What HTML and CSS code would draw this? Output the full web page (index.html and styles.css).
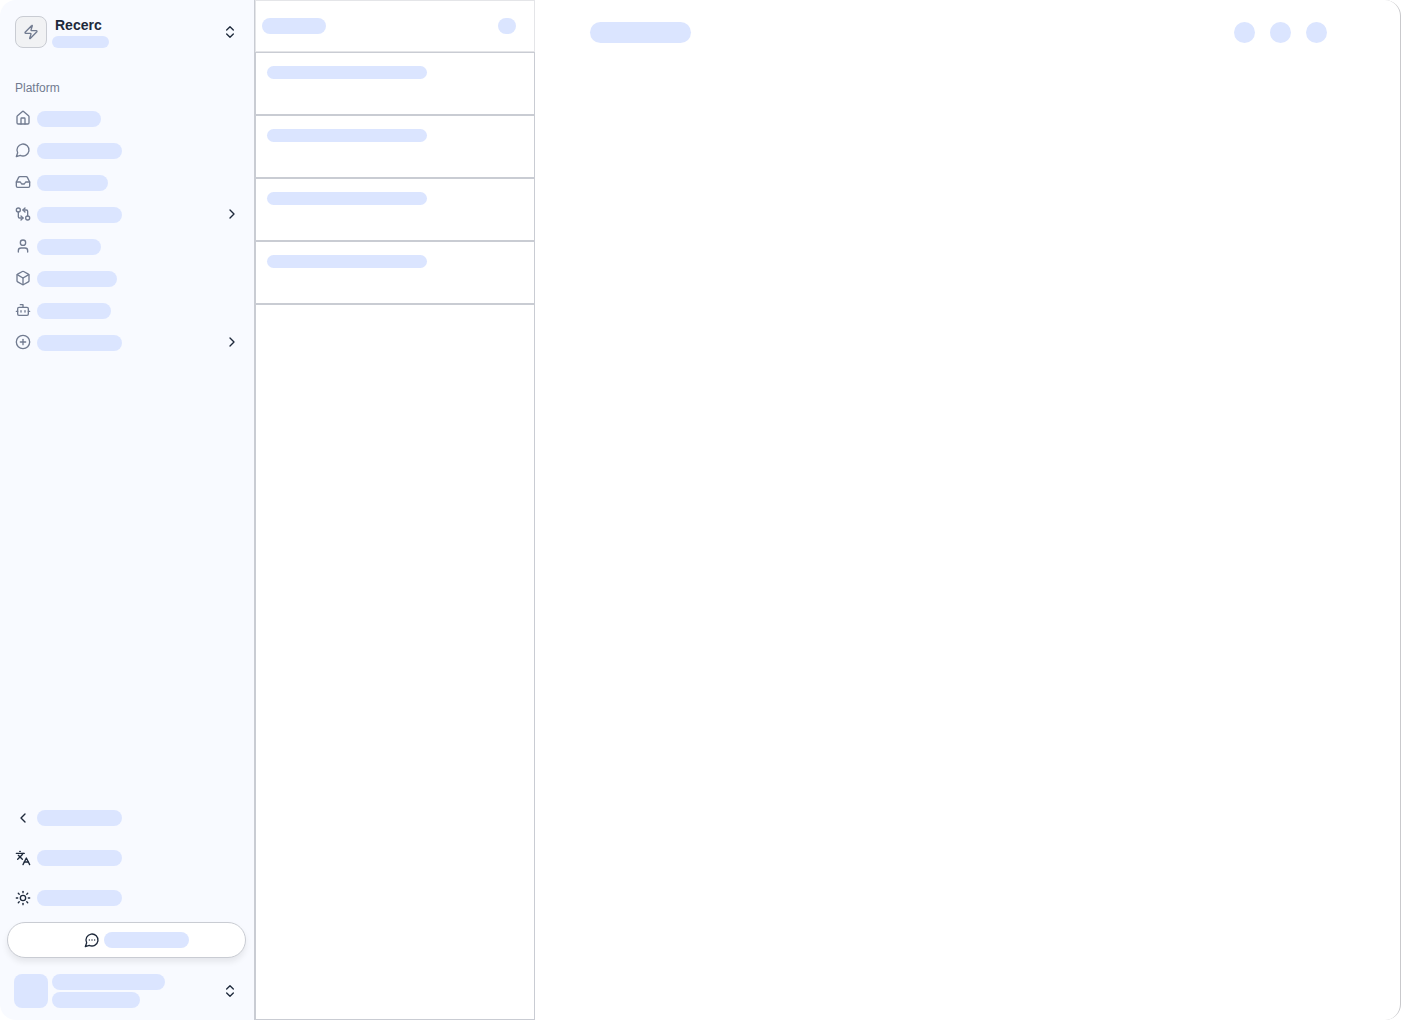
FILE: index.html
```html
<!DOCTYPE html>
<html lang="en">
<head>
    <meta charset="UTF-8">
    <meta name="viewport" content="width=device-width, initial-scale=1.0">
    <title>Recerc</title>

    <link rel="stylesheet" href="styles.css">
</head>
<body>
    <div class="app">
        <aside class="sidebar">
            <button class="team" type="button">
                <span class="team-logo">
                    <svg class="icon" viewBox="0 0 24 24"><path d="M4 14a1 1 0 0 1-.78-1.63l9.9-10.2a.5.5 0 0 1 .86.46l-1.92 6.02A1 1 0 0 0 13 10h7a1 1 0 0 1 .78 1.63l-9.9 10.2a.5.5 0 0 1-.86-.46l1.92-6.02A1 1 0 0 0 11 14z"/></svg>
                </span>
                <span class="team-text">
                    <span class="team-name">Recerc</span>
                    <span class="bar small w-57"></span>
                </span>
                <svg class="icon dark end" viewBox="0 0 24 24"><path d="m7 15 5 5 5-5"/><path d="m7 9 5-5 5 5"/></svg>
            </button>

            <h2 class="group-label">Platform</h2>
            <nav class="nav">
                <a href="#" class="nav-item" aria-label="Home">
                    <svg class="icon" viewBox="0 0 24 24"><path d="M15 21v-8a1 1 0 0 0-1-1h-4a1 1 0 0 0-1 1v8"/><path d="M3 10a2 2 0 0 1 .709-1.528l7-6a2 2 0 0 1 2.582 0l7 6A2 2 0 0 1 21 10v9a2 2 0 0 1-2 2H5a2 2 0 0 1-2-2z"/></svg>
                    <span class="bar w-64"></span>
                </a>
                <a href="#" class="nav-item" aria-label="Chat">
                    <svg class="icon" viewBox="0 0 24 24"><path d="M7.9 20A9 9 0 1 0 4 16.1L2 22Z"/></svg>
                    <span class="bar w-85"></span>
                </a>
                <a href="#" class="nav-item" aria-label="Inbox">
                    <svg class="icon" viewBox="0 0 24 24"><path d="M22 12h-6l-2 3h-4l-2-3H2"/><path d="M5.45 5.11 2 12v6a2 2 0 0 0 2 2h16a2 2 0 0 0 2-2v-6l-3.45-6.89A2 2 0 0 0 16.76 4H7.24a2 2 0 0 0-1.79 1.11z"/></svg>
                    <span class="bar w-71"></span>
                </a>
                <a href="#" class="nav-item" aria-label="Workflows">
                    <svg class="icon" viewBox="0 0 24 24"><circle cx="5" cy="6" r="3"/><path d="M12 6h5a2 2 0 0 1 2 2v7"/><path d="m15 9-3-3 3-3"/><circle cx="19" cy="18" r="3"/><path d="M12 18H7a2 2 0 0 1-2-2V9"/><path d="m9 15 3 3-3 3"/></svg>
                    <span class="bar w-85"></span>
                    <svg class="icon dark end" viewBox="0 0 24 24"><path d="m9 18 6-6-6-6"/></svg>
                </a>
                <a href="#" class="nav-item" aria-label="Contacts">
                    <svg class="icon" viewBox="0 0 24 24"><path d="M19 21v-2a4 4 0 0 0-4-4H9a4 4 0 0 0-4 4v2"/><circle cx="12" cy="7" r="4"/></svg>
                    <span class="bar w-64"></span>
                </a>
                <a href="#" class="nav-item" aria-label="Products">
                    <svg class="icon" viewBox="0 0 24 24"><path d="M21 8a2 2 0 0 0-1-1.73l-7-4a2 2 0 0 0-2 0l-7 4A2 2 0 0 0 3 8v8a2 2 0 0 0 1 1.73l7 4a2 2 0 0 0 2 0l7-4A2 2 0 0 0 21 16Z"/><path d="m3.3 7 8.7 5 8.7-5"/><path d="M12 22V12"/></svg>
                    <span class="bar w-80"></span>
                </a>
                <a href="#" class="nav-item" aria-label="Agents">
                    <svg class="icon" viewBox="0 0 24 24"><path d="M12 8V4H8"/><rect width="16" height="12" x="4" y="8" rx="2"/><path d="M2 14h2"/><path d="M20 14h2"/><path d="M15 13v2"/><path d="M9 13v2"/></svg>
                    <span class="bar w-74"></span>
                </a>
                <a href="#" class="nav-item" aria-label="More">
                    <svg class="icon" viewBox="0 0 24 24"><circle cx="12" cy="12" r="10"/><path d="M8 12h8"/><path d="M12 8v8"/></svg>
                    <span class="bar w-85"></span>
                    <svg class="icon dark end" viewBox="0 0 24 24"><path d="m9 18 6-6-6-6"/></svg>
                </a>
            </nav>

            <div class="tools">
                <button class="tool" type="button" aria-label="Collapse">
                    <svg class="icon dark" viewBox="0 0 24 24"><path d="m15 18-6-6 6-6"/></svg>
                    <span class="bar w-85"></span>
                </button>
                <button class="tool" type="button" aria-label="Language">
                    <svg class="icon dark" viewBox="0 0 24 24"><path d="m5 8 6 6"/><path d="m4 14 6-6 2-3"/><path d="M2 5h12"/><path d="M7 2h1"/><path d="m22 22-5-10-5 10"/><path d="M14 18h6"/></svg>
                    <span class="bar w-85"></span>
                </button>
                <button class="tool" type="button" aria-label="Theme">
                    <svg class="icon dark" viewBox="0 0 24 24"><circle cx="12" cy="12" r="4"/><path d="M12 2v2"/><path d="M12 20v2"/><path d="m4.93 4.93 1.41 1.41"/><path d="m17.66 17.66 1.41 1.41"/><path d="M2 12h2"/><path d="M20 12h2"/><path d="m6.34 17.66-1.41 1.41"/><path d="m19.07 4.93-1.41 1.41"/></svg>
                    <span class="bar w-85"></span>
                </button>
            </div>

            <button class="support" type="button" aria-label="Support">
                <svg class="icon dark" viewBox="0 0 24 24"><path d="M7.9 20A9 9 0 1 0 4 16.1L2 22Z"/><path d="M8 12h.01"/><path d="M12 12h.01"/><path d="M16 12h.01"/></svg>
                <span class="bar w-85"></span>
            </button>

            <button class="user" type="button" aria-label="Account">
                <span class="avatar"></span>
                <span class="user-text">
                    <span class="bar w-113"></span>
                    <span class="bar w-88"></span>
                </span>
                <svg class="icon dark end" viewBox="0 0 24 24"><path d="m7 15 5 5 5-5"/><path d="m7 9 5-5 5 5"/></svg>
            </button>
        </aside>

        <section class="list">
            <header class="list-header">
                <span class="bar w-64"></span>
                <span class="bar w-18"></span>
            </header>
            <ul class="threads">
                <li class="thread"><span class="bar line w-160"></span></li>
                <li class="thread"><span class="bar line w-160"></span></li>
                <li class="thread"><span class="bar line w-160"></span></li>
                <li class="thread"><span class="bar line w-160"></span></li>
            </ul>
        </section>

        <main class="content">
            <header class="content-header">
                <span class="bar large w-101"></span>
                <div class="actions">
                    <span class="dot"></span>
                    <span class="dot"></span>
                    <span class="dot"></span>
                </div>
            </header>
        </main>
    </div>
</body>
</html>
```

FILE: styles.css
```css
*, *:before, *:after{
    margin: 0;
    padding: 0;
    box-sizing: border-box;
}
body{
    background: #fff;
    color: #1e293b;
    font-family: "Liberation Sans", Arial, sans-serif;
}
button{
    border: none;
    background: none;
    font: inherit;
    color: inherit;
    text-align: left;
    cursor: pointer;
}
a{
    color: inherit;
    text-decoration: none;
}
.app{
    min-height: 100vh;
    display: flex;
}

/* placeholder bars */
.bar{
    display: block;
    flex: none;
    height: 16px;
    border-radius: 8px;
    background: #dbe5ff;
}
.small{ height: 12px; }
.line{ height: 13px; }
.large{
    height: 21px;
    border-radius: 11px;
}
.w-18{ width: 18px; }
.w-57{ width: 57px; }
.w-64{ width: 64px; }
.w-71{ width: 71px; }
.w-74{ width: 74px; }
.w-80{ width: 80px; }
.w-85{ width: 85px; }
.w-88{ width: 88px; }
.w-101{ width: 101px; }
.w-113{ width: 113px; }
.w-160{ width: 160px; }

.icon{
    flex: none;
    width: 16px;
    height: 16px;
    fill: none;
    stroke: #717b90;
    stroke-width: 2;
    stroke-linecap: round;
    stroke-linejoin: round;
}
.dark{ stroke: #1e293b; }
.end{ margin-left: auto; }

/* sidebar */
.sidebar{
    flex: none;
    width: 255px;
    display: flex;
    flex-direction: column;
    background: #f8faff;
    border-right: 1px solid #c9ccd3;
    border-radius: 16px 0 0 16px;
}
.team{
    display: flex;
    align-items: center;
    gap: 5px;
    padding: 16px 16px 16px 15px;
}
.team-logo{
    width: 32px;
    height: 32px;
    display: flex;
    align-items: center;
    justify-content: center;
    background: #f1f2f4;
    border: 1px solid #c9ccd3;
    border-radius: 8px;
}
.team-text{
    display: flex;
    flex-direction: column;
    gap: 3px;
}
.team-name{
    padding-left: 3px;
    font-size: 14px;
    line-height: 16px;
    font-weight: bold;
}
.group-label{
    padding: 16px 15px 6px;
    font-size: 12px;
    line-height: 16px;
    font-weight: normal;
    color: #717b90;
}
.nav{
    display: flex;
    flex-direction: column;
}
.nav-item{
    display: flex;
    align-items: center;
    gap: 6px;
    height: 32px;
    padding: 0 14px 0 15px;
}
.nav-item .bar{
    margin-top: 2px;
}
.tools{
    margin-top: auto;
    display: flex;
    flex-direction: column;
}
.tool{
    display: flex;
    align-items: center;
    gap: 6px;
    height: 40px;
    padding: 0 15px;
}
.support{
    display: flex;
    align-items: center;
    justify-content: center;
    gap: 4px;
    height: 36px;
    margin: 4px 8px 0 7px;
    padding-left: 20px;
    background: #fff;
    border: 1px solid #c9ccd3;
    border-radius: 18px;
    box-shadow: 0 4px 6px rgba(0, 0, 0, 0.08);
}
.user{
    display: flex;
    align-items: center;
    gap: 4px;
    padding: 16px 16px 12px 14px;
}
.avatar{
    width: 34px;
    height: 34px;
    border-radius: 8px;
    background: #dbe5ff;
}
.user-text{
    display: flex;
    flex-direction: column;
    gap: 2px;
}

/* thread list */
.list{
    flex: none;
    width: 280px;
    display: flex;
    flex-direction: column;
}
.list-header{
    display: flex;
    align-items: center;
    justify-content: space-between;
    height: 52px;
    padding: 0 18px 0 6px;
    border: 1px solid #e4e5e8;
}
.threads{
    flex: 1;
    list-style: none;
    border: 1px solid #c9ccd3;
}
.thread{
    height: 63px;
    padding: 13px 11px;
    border-bottom: 2px solid #c9ccd3;
}

/* content */
.content{
    flex: 1;
    border-right: 1px solid #c9c9cc;
    border-radius: 0 16px 16px 0;
}
.content-header{
    display: flex;
    align-items: center;
    justify-content: space-between;
    padding: 22px 73px 22px 55px;
}
.actions{
    display: flex;
    gap: 15px;
}
.dot{
    width: 21px;
    height: 21px;
    border-radius: 50%;
    background: #dbe5ff;
}
```
